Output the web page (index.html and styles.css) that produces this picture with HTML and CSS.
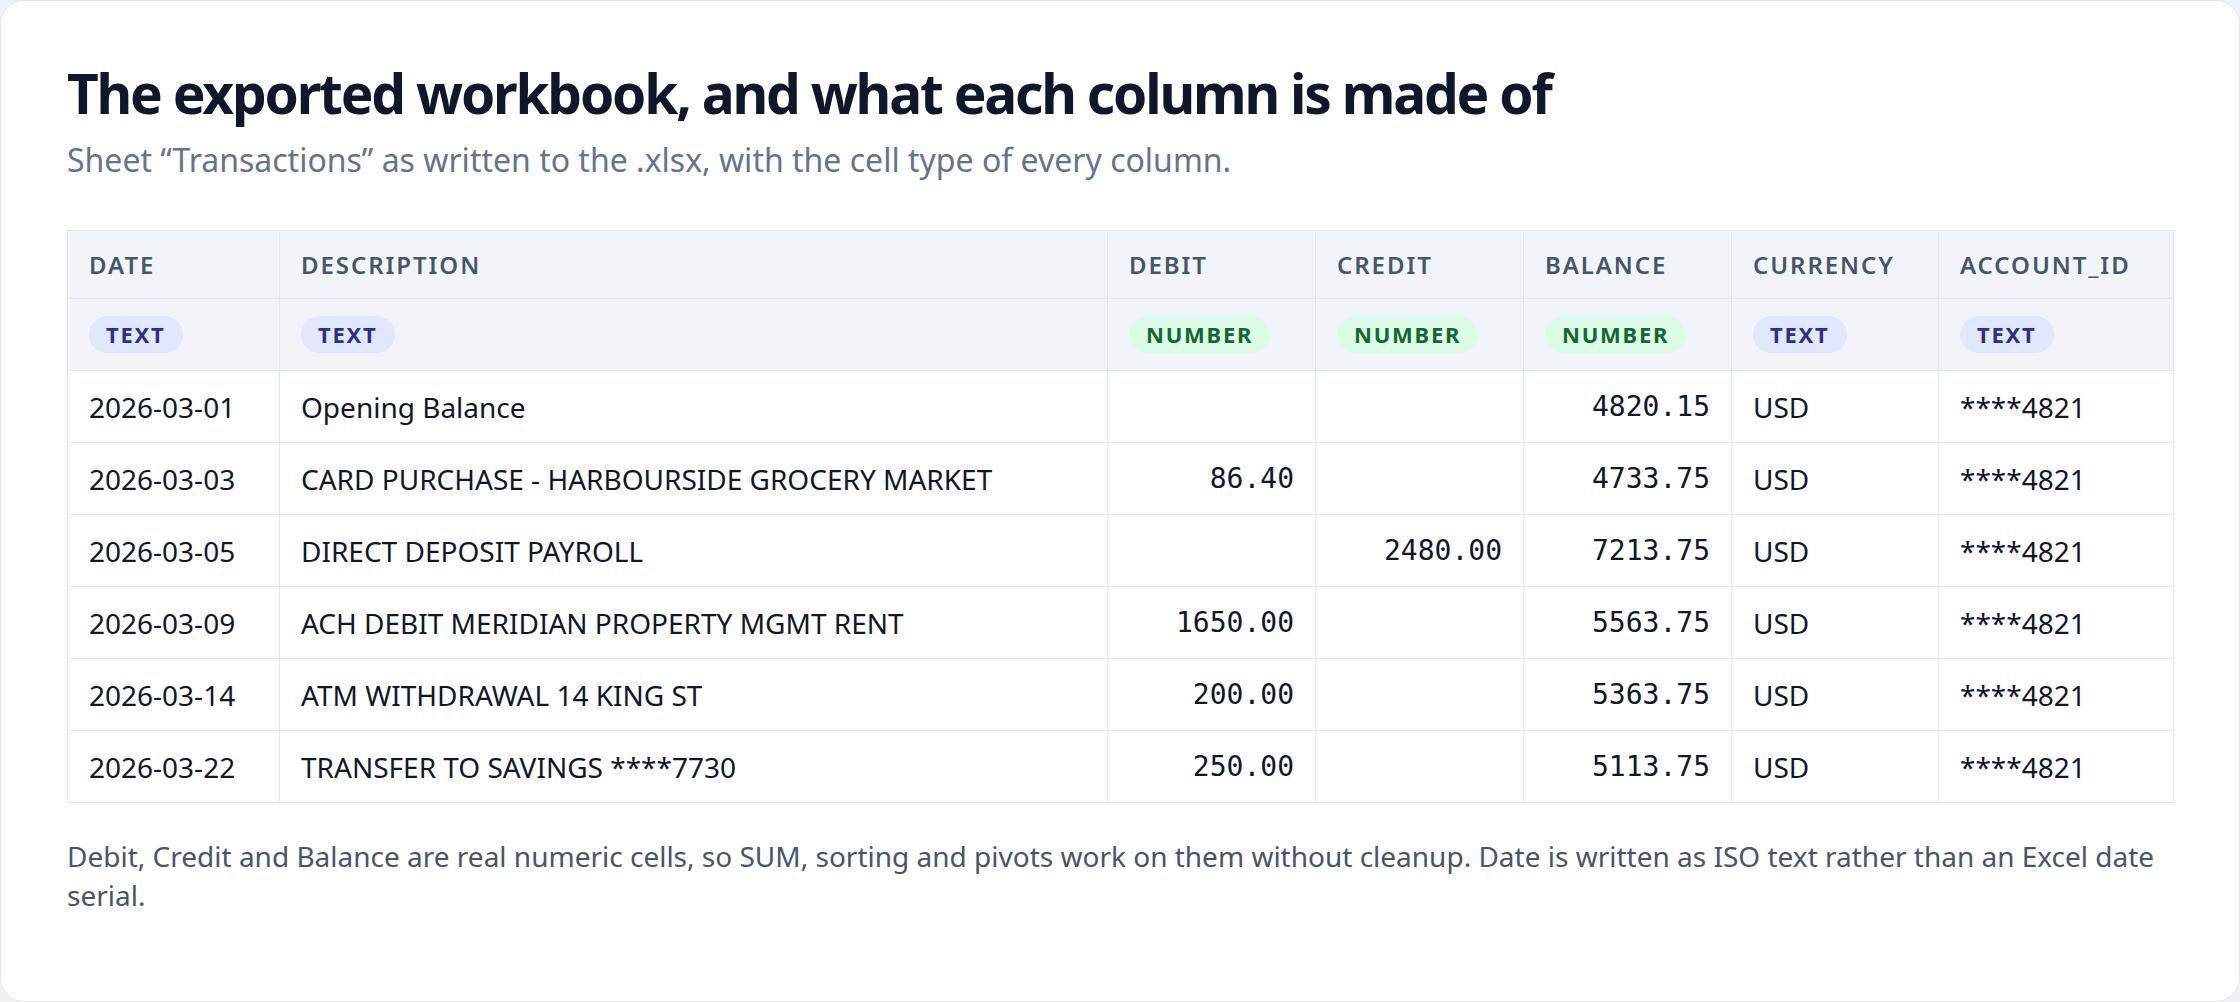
FILE: index.html
```html
<!DOCTYPE html>
<html lang="en">
<head>
<meta charset="utf-8">
<title>Exported workbook</title>
<link rel="stylesheet" href="styles.css">
</head>
<body>
<main class="card">
  <h1 class="title">The exported workbook, and what each column is made of</h1>
  <p class="subtitle">Sheet “Transactions” as written to the .xlsx, with the cell type of every column.</p>
  <table class="sheet">
    <colgroup>
      <col class="c-date"><col class="c-desc"><col class="c-num"><col class="c-num"><col class="c-num"><col class="c-cur"><col class="c-acc">
    </colgroup>
    <thead>
      <tr class="names">
        <th>DATE</th><th>DESCRIPTION</th><th>DEBIT</th><th>CREDIT</th><th>BALANCE</th><th>CURRENCY</th><th>ACCOUNT_ID</th>
      </tr>
      <tr class="types">
        <th><span class="badge text">TEXT</span></th>
        <th><span class="badge text">TEXT</span></th>
        <th><span class="badge number">NUMBER</span></th>
        <th><span class="badge number">NUMBER</span></th>
        <th><span class="badge number">NUMBER</span></th>
        <th><span class="badge text">TEXT</span></th>
        <th><span class="badge text">TEXT</span></th>
      </tr>
    </thead>
    <tbody>
      <tr><td>2026-03-01</td><td>Opening Balance</td><td class="num"></td><td class="num"></td><td class="num">4820.15</td><td>USD</td><td>****4821</td></tr>
      <tr><td>2026-03-03</td><td>CARD PURCHASE - HARBOURSIDE GROCERY MARKET</td><td class="num">86.40</td><td class="num"></td><td class="num">4733.75</td><td>USD</td><td>****4821</td></tr>
      <tr><td>2026-03-05</td><td>DIRECT DEPOSIT PAYROLL</td><td class="num"></td><td class="num">2480.00</td><td class="num">7213.75</td><td>USD</td><td>****4821</td></tr>
      <tr><td>2026-03-09</td><td>ACH DEBIT MERIDIAN PROPERTY MGMT RENT</td><td class="num">1650.00</td><td class="num"></td><td class="num">5563.75</td><td>USD</td><td>****4821</td></tr>
      <tr><td>2026-03-14</td><td>ATM WITHDRAWAL 14 KING ST</td><td class="num">200.00</td><td class="num"></td><td class="num">5363.75</td><td>USD</td><td>****4821</td></tr>
      <tr><td>2026-03-22</td><td>TRANSFER TO SAVINGS ****7730</td><td class="num">250.00</td><td class="num"></td><td class="num">5113.75</td><td>USD</td><td>****4821</td></tr>
    </tbody>
  </table>
  <p class="note">Debit, Credit and Balance are real numeric cells, so SUM, sorting and pivots work on them without cleanup. Date is written as ISO text rather than an Excel date serial.</p>
</main>
</body>
</html>
```

FILE: styles.css
```css
* { box-sizing: border-box; }

html, body {
  margin: 0;
  padding: 0;
  background: #eef2f6;
}

body {
  font-family: "Noto Sans", "Open Sans", sans-serif;
  color: #1e293b;
}

.card {
  height: 1002px;
  background: #ffffff;
  border: 1px solid #e2e8f0;
  border-radius: 24px;
  padding: 59px 66px 0;
}

.title {
  margin: 0;
  font-size: 55px;
  line-height: 66px;
  font-weight: 700;
  color: #0f172a;
  letter-spacing: -0.04em;
}

.subtitle {
  margin: 12px 0 0;
  font-size: 32px;
  line-height: 44px;
  color: #64748b;
}

.sheet {
  margin-top: 48px;
  width: 100%;
  border-collapse: collapse;
  table-layout: fixed;
  border: 1px solid #e2e8f0;
}

.c-date { width: 212px; }
.c-desc { width: 828px; }
.c-num { width: 208px; }
.c-cur { width: 207px; }
.c-acc { width: 235px; }

.sheet th,
.sheet td {
  border: 1px solid #e2e8f0;
  padding: 0 21px;
  text-align: left;
  white-space: nowrap;
}

.sheet thead th {
  background: #f1f5f9;
}

.names th {
  height: 68px;
  font-size: 24px;
  font-weight: 600;
  color: #475569;
  letter-spacing: 0.08em;
}

.types th {
  height: 72px;
}

.badge {
  display: inline-block;
  height: 37px;
  line-height: 37px;
  padding: 0 17px;
  border-radius: 19px;
  font-size: 22px;
  font-weight: 700;
  letter-spacing: 0.08em;
  vertical-align: middle;
}

.badge.text {
  background: #e0e7ff;
  color: #312e81;
}

.badge.number {
  background: #dcfce7;
  color: #166534;
}

.sheet td {
  height: 72px;
  font-size: 28px;
  color: #0f172a;
}

.sheet td.num {
  text-align: right;
  font-family: "DejaVu Sans Mono", "Liberation Mono", monospace;
  font-size: 28px;
}

.note {
  margin: 34px 0 0;
  font-size: 28px;
  line-height: 39px;
  color: #475569;
}
```
